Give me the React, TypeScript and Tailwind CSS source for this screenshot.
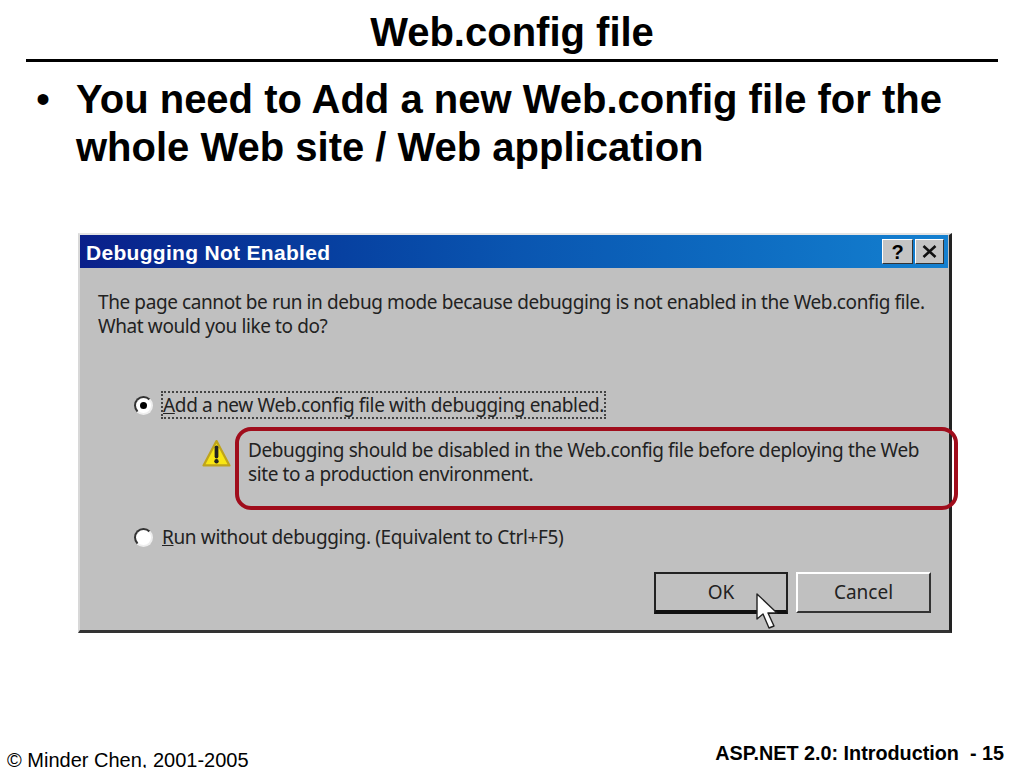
import React from "react";

const WarningIcon = () => (
  <svg width="29" height="29" viewBox="0 0 28 28" className="shrink-0">
    <path d="M14 2 L26.5 25.5 L1.5 25.5 Z" fill="#f8e614" stroke="#bfa41c" strokeWidth="2.2" strokeLinejoin="round" />
    <path d="M14 8 L14 17" stroke="#222" strokeWidth="3.6" strokeLinecap="round" />
    <circle cx="14" cy="21.5" r="2.1" fill="#222" />
  </svg>
);

const Radio = ({ checked }: { checked?: boolean }) => (
  <span className="w-[19px] h-[19px] rounded-full bg-white border-2 border-t-[#333] border-l-[#333] border-r-[#eee] border-b-[#eee] flex items-center justify-center shrink-0">
    {checked && <span className="w-[7px] h-[7px] rounded-full bg-black" />}
  </span>
);

const App = () => {
  return (
    <div className="relative w-[1024px] h-[768px] overflow-hidden bg-white text-black font-['Liberation_Sans',Arial,sans-serif] flex flex-col">
      <h1 className="h-[59px] pt-[9px] text-center text-[40px] leading-[46px] font-bold">Web.config file</h1>
      <div className="mx-[26px] h-[3px] bg-black" />

      <div className="flex mt-[13px] pl-[36px] pr-[40px] text-[40px] leading-[48px] font-bold">
        <span className="w-[40px] shrink-0 font-normal">•</span>
        <p>You need to Add a new Web.config file for the whole Web site / Web application</p>
      </div>

      {/* dialog */}
      <div className="relative ml-[78px] mt-[62px] w-[874px] h-[400px] bg-[#c0c0c0] border-l-2 border-t-2 border-l-[#d8d8d8] border-t-[#e4e4e4] border-r-[3px] border-b-[3px] border-r-[#222] border-b-[#333] text-[#222] font-['Noto_Sans',sans-serif]">
        <div className="h-[33px] mr-[1px] flex items-center justify-between pl-[6px] pr-[4px] bg-gradient-to-r from-[#0a1f8a] via-[#0a55b0] to-[#1480d0]">
          <span className="text-white font-['Liberation_Sans',sans-serif] font-bold text-[21px] tracking-[0.3px] translate-y-[1px]">Debugging Not Enabled</span>
          <div className="flex gap-[2px]">
            <span className="w-[31px] h-[25px] bg-[#c4c4c4] border border-t-white border-l-white border-r-[#333] border-b-[#333] flex items-center justify-center font-['Liberation_Sans',sans-serif] font-bold text-[20px] text-black">?</span>
            <span className="w-[29px] h-[25px] bg-[#c4c4c4] border border-t-white border-l-white border-r-[#333] border-b-[#333] flex items-center justify-center">
              <svg width="15" height="13" viewBox="0 0 15 13">
                <path d="M1.5 1 L13.5 12 M13.5 1 L1.5 12" stroke="#111" strokeWidth="2.6" />
              </svg>
            </span>
          </div>
        </div>

        <div className="pl-[18px] pt-[22px] text-[19px] leading-[24px] tracking-[-0.4px]">
          <p className="whitespace-nowrap">The page cannot be run in debug mode because debugging is not enabled in the Web.config file.</p>
          <p>What would you like to do?</p>
        </div>

        <div className="flex items-center ml-[54px] mt-[54px] gap-[9px] text-[19px] tracking-[-0.35px]">
          <Radio checked />
          <span className="px-[1px] leading-[26px] outline-2 outline-dotted outline-[#444] -outline-offset-1 whitespace-nowrap">
            <span className="underline">A</span>dd a new Web.config file with debugging enabled.
          </span>
        </div>

        <div className="flex ml-[122px] mt-[11px] text-[19px] leading-[24px] tracking-[-0.4px]">
          <div className="pt-[10px]">
            <WarningIcon />
          </div>
          <p className="ml-[17px] pt-[9px] w-[690px]">
            Debugging should be disabled in the Web.config file before deploying the Web site to a production environment.
          </p>
        </div>

        <div className="flex items-center ml-[54px] mt-[38px] gap-[9px] text-[19px] leading-[26px] tracking-[-0.35px]">
          <Radio />
          <span>
            <span className="underline">R</span>un without debugging. (Equivalent to Ctrl+F5)
          </span>
        </div>

        <div className="flex justify-end gap-[8px] pr-[18px] mt-[22px] text-[19px]">
          <button className="w-[134px] h-[42px] bg-[#c0c0c0] border-2 border-t-[#222] border-l-[#222] border-r-[#222] border-b-[4px] border-b-[#111]">OK</button>
          <button className="w-[135px] h-[41px] bg-[#c0c0c0] border-2 border-t-white border-l-white border-r-[#333] border-b-[#333]">Cancel</button>
        </div>

        {/* red annotation */}
        <div className="absolute left-[155px] top-[192px] w-[723px] h-[83px] rounded-[16px] border-[4px] border-[#a00d1c]" />

        {/* pointer */}
        <svg width="26" height="42" viewBox="0 0 26 40" className="absolute left-[675px] top-[357px]">
          <path d="M2 1 L2 26 L8 21 L14 35 L19 33 L13 20 L22 20 Z" fill="#fff" stroke="#222" strokeWidth="1.4" strokeLinejoin="round" />
        </svg>
      </div>

      <div className="mt-auto flex justify-between items-end pl-[7px] pr-[20px]">
        <span className="text-[20px] leading-[23px] -mb-[4px]">© Minder Chen, 2001-2005</span>
        <span className="text-[19.8px] leading-[23px] font-bold mb-[3px]">ASP.NET 2.0: Introduction&nbsp; - 15</span>
      </div>
    </div>
  );
};

export default App;
